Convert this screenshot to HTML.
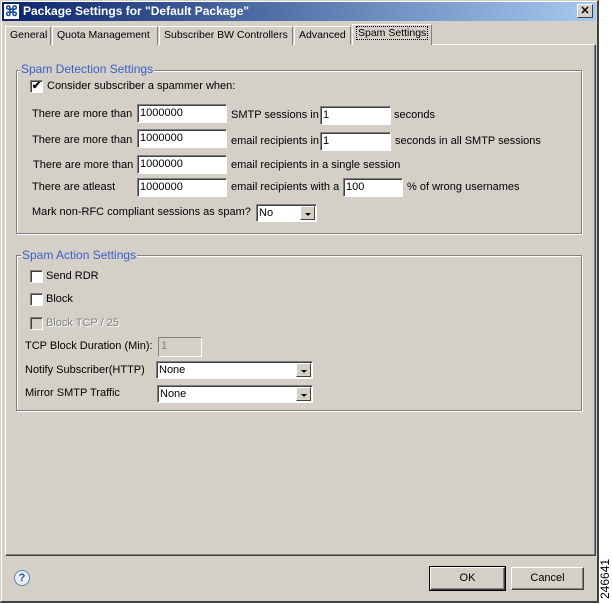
<!DOCTYPE html>
<html><head><meta charset="utf-8"><style>
*{box-sizing:border-box;margin:0;padding:0}
body{width:612px;height:604px;background:#fff;position:relative;overflow:hidden;font-family:"Liberation Sans",Arial,sans-serif;font-size:11px;color:#000}
.a{position:absolute;white-space:nowrap}
.win{left:0;top:0;width:599px;height:603px;background:#d4d0c8;border:1px solid #d4d0c8;border-right:2px solid #404040;border-bottom:2px solid #404040;box-shadow:inset 1px 1px 0 #fff}
.title{left:2px;top:2px;width:594px;height:19px;background:linear-gradient(to right,#0a246a,#a6caf0);color:#fff;font-weight:bold;font-size:12px;line-height:19px;padding-left:21px}
.tab{top:26px;height:19px;border:1px solid #fff;border-right:1px solid #808080;border-bottom:none;line-height:17px;padding-left:4px;background:#d4d0c8;font-size:10.5px;overflow:hidden}
.panel{left:5px;top:44px;width:591px;height:512px;border:1px solid #fff;border-right:1px solid #404040;border-bottom:1px solid #404040;box-shadow:inset -1px -1px 0 #808080}
.grp{border:1px solid #808080;box-shadow:1px 1px 0 #fff, inset 1px 1px 0 #fff}
.leg{background:#d4d0c8;color:#3d5fc7;font-size:12px;padding:0 1px}
.inp{background:#fff;border:1px solid #808080;border-right-color:#fff;border-bottom-color:#fff;box-shadow:inset 1px 1px 0 #404040;padding-left:2px;line-height:16px}
.cb{width:13px;height:13px;background:#fff;border:1px solid #808080;border-right-color:#fff;border-bottom-color:#fff;box-shadow:inset 1px 1px 0 #404040}
.arr{position:absolute;right:1px;top:1px;width:15px;bottom:1px;background:#d4d0c8;border:1px solid #fff;border-right-color:#404040;border-bottom-color:#404040}
.arr:after{content:"";position:absolute;left:4px;top:6px;border-left:3px solid transparent;border-right:3px solid transparent;border-top:3px solid #000}
.btn{top:567px;height:23px;border:1px solid #fff;border-right:1px solid #404040;border-bottom:1px solid #404040;box-shadow:inset -1px -1px 0 #808080;text-align:center;line-height:21px}
</style></head><body>
<div class="a win"></div>
<div class="a title">Package Settings for "Default Package"</div>
<div class="a" style="left:4px;top:4px;width:15px;height:15px;background:#fff;color:#1a4a9a;font-size:14px;line-height:15px;text-align:center;font-weight:bold">⌘</div>
<div class="a" style="left:577px;top:4px;width:16px;height:14px;background:#d4d0c8;border:1px solid #fff;border-right-color:#404040;border-bottom-color:#404040;text-align:center;font-weight:bold;line-height:12px;font-size:11px">✕</div>
<div class="a panel"></div>
<div class="a tab" style="left:5px;width:46px">General</div>
<div class="a tab" style="left:52px;width:106px">Quota Management</div>
<div class="a tab" style="left:159px;width:134px">Subscriber BW Controllers</div>
<div class="a tab" style="left:294px;width:57px">Advanced</div>
<div class="a tab" style="left:352px;top:24px;height:21px;width:80px;border-bottom:none"><span style="outline:1px dotted #000;padding:0 1px">Spam Settings</span></div>

<div class="a grp" style="left:16px;top:70px;width:566px;height:164px"></div>
<div class="a leg" style="left:20px;top:62px">Spam Detection Settings</div>
<div class="a cb" style="left:30px;top:80px;font-size:11px;line-height:11px;text-align:center;font-weight:bold">✔</div>
<div class="a" style="left:47px;top:80px">Consider subscriber a spammer when:</div>

<div class="a" style="left:32px;top:108px">There are more than</div>
<div class="a inp" style="left:137px;top:104px;width:90px;height:19px">1000000</div>
<div class="a" style="left:231px;top:109px">SMTP sessions in</div>
<div class="a inp" style="left:320px;top:106px;width:71px;height:19px">1</div>
<div class="a" style="left:394px;top:109px">seconds</div>

<div class="a" style="left:32px;top:134px">There are more than</div>
<div class="a inp" style="left:137px;top:129px;width:90px;height:19px">1000000</div>
<div class="a" style="left:231px;top:135px">email recipients in</div>
<div class="a inp" style="left:320px;top:132px;width:71px;height:19px">1</div>
<div class="a" style="left:395px;top:135px">seconds in all SMTP sessions</div>

<div class="a" style="left:33px;top:159px">There are more than</div>
<div class="a inp" style="left:137px;top:155px;width:90px;height:19px">1000000</div>
<div class="a" style="left:231px;top:159px">email recipients in a single session</div>

<div class="a" style="left:32px;top:181px">There are atleast</div>
<div class="a inp" style="left:137px;top:178px;width:90px;height:19px">1000000</div>
<div class="a" style="left:231px;top:181px">email recipients with a</div>
<div class="a inp" style="left:343px;top:178px;width:60px;height:19px">100</div>
<div class="a" style="left:407px;top:181px">% of wrong usernames</div>

<div class="a" style="left:32px;top:206px">Mark non-RFC compliant sessions as spam?</div>
<div class="a inp" style="left:256px;top:204px;width:61px;height:18px">No<div class="arr"></div></div>

<div class="a grp" style="left:16px;top:255px;width:566px;height:156px"></div>
<div class="a leg" style="left:21px;top:248px">Spam Action Settings</div>
<div class="a cb" style="left:30px;top:270px"></div>
<div class="a" style="left:46px;top:270px">Send RDR</div>
<div class="a cb" style="left:30px;top:293px"></div>
<div class="a" style="left:46px;top:293px">Block</div>
<div class="a cb" style="left:30px;top:317px;background:#d4d0c8"></div>
<div class="a" style="left:46px;top:317px;color:#808080;text-shadow:1px 1px 0 #fff">Block TCP / 25</div>
<div class="a" style="left:25px;top:340px">TCP Block Duration (Min):</div>
<div class="a inp" style="left:158px;top:337px;width:44px;height:20px;background:#d4d0c8;color:#808080;box-shadow:none">1</div>
<div class="a" style="left:25px;top:364px">Notify Subscriber(HTTP)</div>
<div class="a inp" style="left:156px;top:361px;width:157px;height:18px">None<div class="arr"></div></div>
<div class="a" style="left:25px;top:387px">Mirror SMTP Traffic</div>
<div class="a inp" style="left:157px;top:385px;width:156px;height:18px">None<div class="arr"></div></div>

<div class="a" style="left:14px;top:570px;width:16px;height:16px;border-radius:50%;background:#e8eef8;border:1px solid #6080b0;color:#3050a0;font-size:11px;font-weight:bold;text-align:center;line-height:14px">?</div>
<div class="a btn" style="left:430px;width:75px;outline:1px solid #000">OK</div>
<div class="a btn" style="left:511px;width:73px">Cancel</div>
<div class="a" style="left:599px;top:599px;transform:rotate(-90deg);transform-origin:0 0;font-size:12px;line-height:13px">246641</div>
</body></html>
